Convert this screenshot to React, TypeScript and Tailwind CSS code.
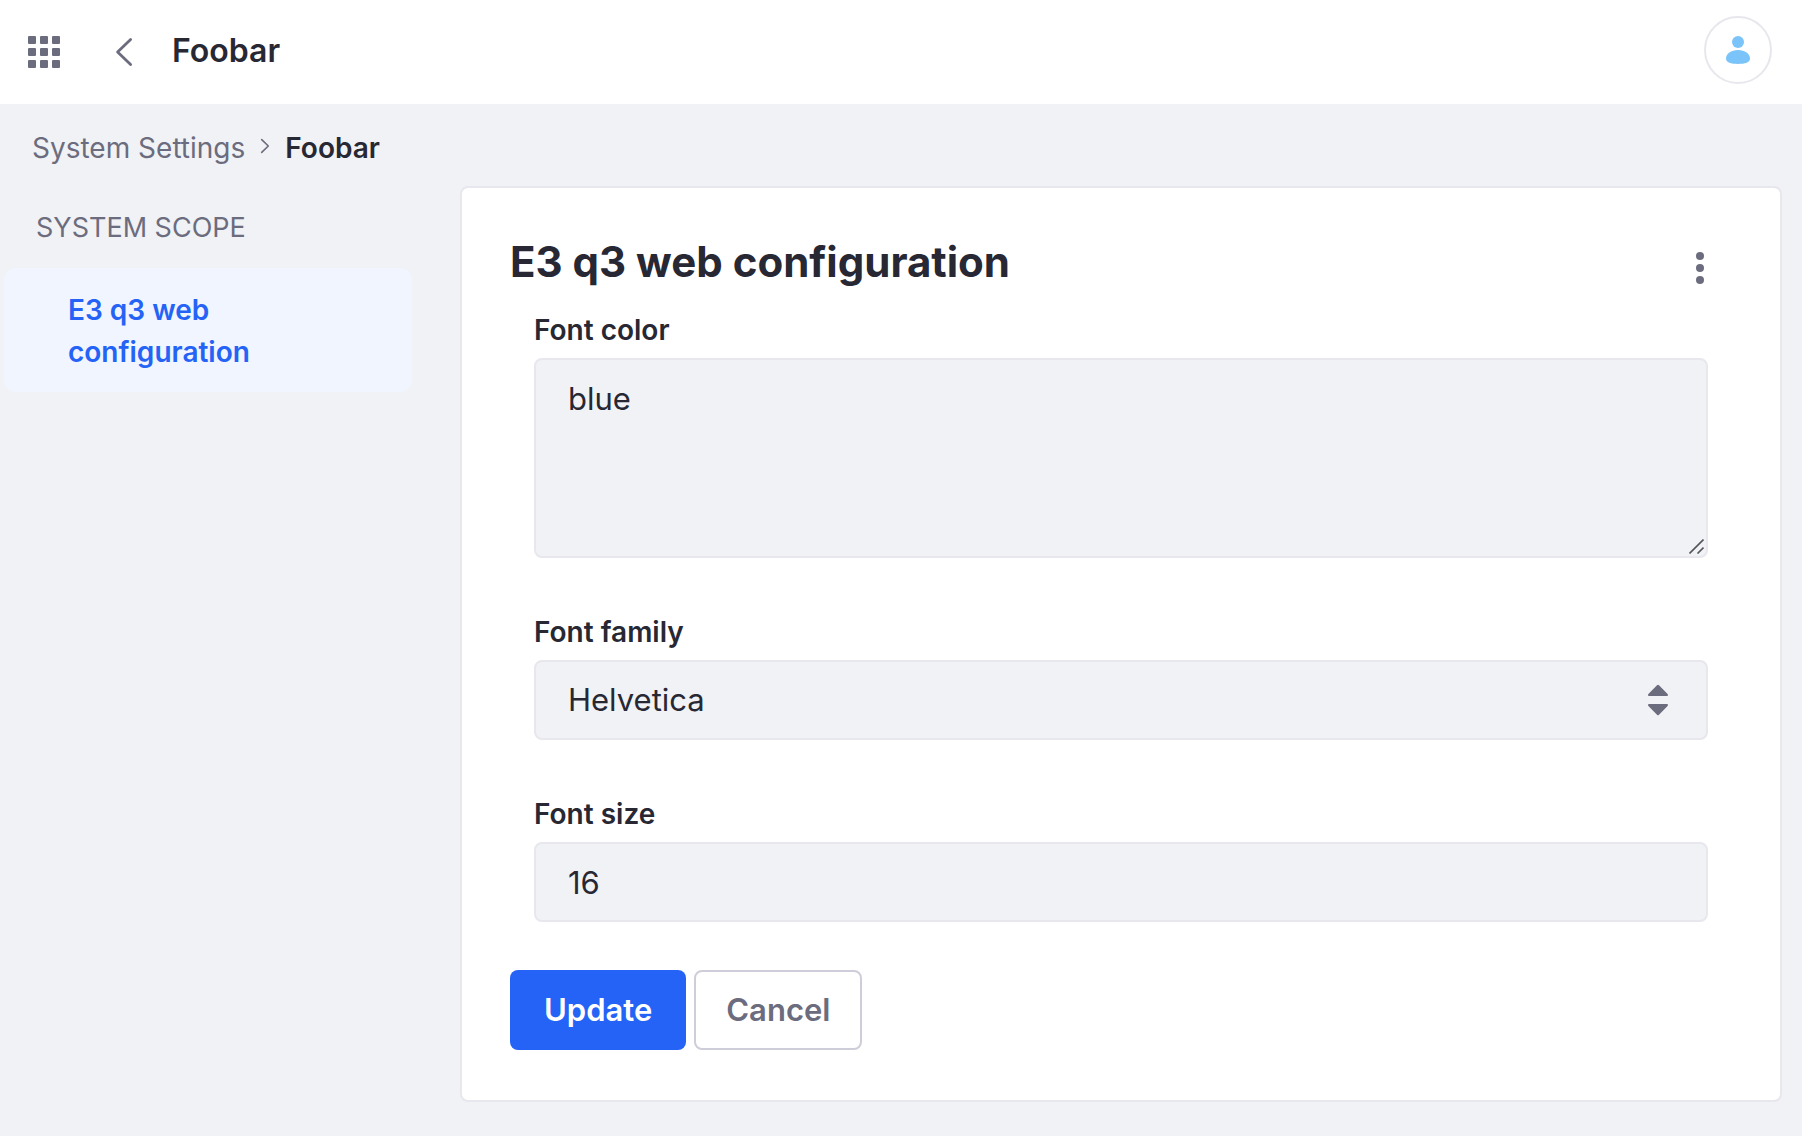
import type { ReactNode } from 'react';

const INPUT =
  'block w-full rounded-lg border-2 border-[#e7e7ed] bg-[#f1f2f5] px-8 text-[31px] leading-[48px] text-[#272833] outline-none focus:border-[#80acff]';

function Field({ id, label, children }: { id: string; label: string; children: ReactNode }) {
  return (
    <div>
      <label htmlFor={id} className="mb-[7px] block text-[28px] leading-[42px] font-semibold">
        {label}
      </label>
      {children}
    </div>
  );
}

function Header() {
  return (
    <header className="flex h-[104px] items-center bg-white pr-[30px] pl-7">
      <button type="button" aria-label="Applications menu" className="text-[#6b6c7e]">
        <svg width="32" height="32" viewBox="0 0 32 32" fill="currentColor">
          {[0, 12, 24].map((y) =>
            [0, 12, 24].map((x) => <rect key={`${x}-${y}`} x={x} y={y} width="8" height="8" rx="1" />),
          )}
        </svg>
      </button>
      <a href="#back" aria-label="Back" className="ml-12 text-[#6b6c7e]">
        <svg width="32" height="32" viewBox="0 0 32 32" fill="none" stroke="currentColor" strokeWidth="2.8" strokeLinecap="round" strokeLinejoin="round">
          <path d="M22.6 3.4 9.6 16l13 12.6" />
        </svg>
      </a>
      <h1 className="mb-0.5 ml-8 text-[32px] leading-[48px] font-semibold">Foobar</h1>
      <button
        type="button"
        aria-label="User profile"
        className="mb-1 ml-auto flex size-[68px] items-center justify-center rounded-full border-2 border-[#e7e7ed] bg-white text-[#7ac4f9]"
      >
        <svg width="24" height="28" viewBox="0 0 24 28" fill="currentColor">
          <circle cx="12" cy="6" r="6" />
          <path d="M12 14c7 0 12 3.8 12 8.600C24 26.800 19 28 12 28S0 26.800 0 22.600C0 17.800 5 14 12 14z" />
        </svg>
      </button>
    </header>
  );
}

export default function App() {
  return (
    <div className="min-h-screen bg-[#f1f2f5] font-['Inter',sans-serif] text-[#272833]">
      <Header />
      <nav aria-label="Breadcrumb" className="px-8 pt-[23px] pb-[17px]">
        <ol className="flex items-center text-[28px] leading-[42px]">
          <li>
            <a href="#system-settings" className="text-[#6b6c7e]">
              System Settings
            </a>
          </li>
          <li aria-hidden="true" className="mx-3.5">
            <svg className="mb-0.5" width="12" height="20" viewBox="0 0 12 20" fill="none" stroke="#6b6c7e" strokeWidth="1.6" strokeLinecap="round" strokeLinejoin="round">
              <path d="M2.700 2.600 9.300 9l-6.600 6.400" />
            </svg>
          </li>
          <li aria-current="page" className="font-semibold">
            Foobar
          </li>
        </ol>
      </nav>
      <div className="flex items-start pr-5">
        <aside className="w-[460px] shrink-0 pt-[21px] pr-12 pl-1">
          <h2 className="mb-[19px] px-8 text-[27px] leading-[42px] text-[#6b6c7e]">SYSTEM SCOPE</h2>
          <a
            href="#e3-q3-web-configuration"
            className="block rounded-xl bg-[#f0f5ff] pt-[21px] pr-32 pb-[19px] pl-16 text-[28px] leading-[42px] font-semibold text-[#2563f6]"
          >
            E3 q3 web configuration
          </a>
        </aside>
        <main className="min-w-0 grow rounded-lg border-2 border-[#e7e7ed] bg-white px-12 pt-12 pb-[50px]">
          <form onSubmit={(e) => e.preventDefault()}>
            <div className="mb-[21px] flex items-center justify-between pr-7">
              <h2 className="text-[42px] leading-[52px] font-bold">E3 q3 web configuration</h2>
              <button type="button" aria-label="Options" className="mt-3 text-[#6b6c7e]">
                <svg width="8" height="32" viewBox="0 0 8 32" fill="currentColor">
                  <circle cx="4" cy="4" r="4" />
                  <circle cx="4" cy="16" r="4" />
                  <circle cx="4" cy="28" r="4" />
                </svg>
              </button>
            </div>
            <div className="flex flex-col gap-[53px] px-6">
              <Field id="font-color" label="Font color">
                <div className="relative">
                  <textarea id="font-color" defaultValue="blue" className={`${INPUT} h-[200px] resize-none py-[15px]`} />
                  <svg className="pointer-events-none absolute right-1 bottom-1" width="15" height="15" viewBox="0 0 15 15" fill="none" stroke="#55565c" strokeWidth="1.6">
                    <path d="M.5 14.500 14.500.5M8.500 14.500l6-6" />
                  </svg>
                </div>
              </Field>
              <Field id="font-family" label="Font family">
                <div className="relative">
                  <select id="font-family" defaultValue="Helvetica" className={`${INPUT} h-20 appearance-none`}>
                    <option>Helvetica</option>
                    <option>Arial</option>
                    <option>Times</option>
                  </select>
                  <svg className="pointer-events-none absolute top-6 right-10" width="20" height="32" viewBox="0 0 20 32" fill="#6b6c7e">
                    <path d="M9 1.200a1.400 1.400 0 0 1 2 0l8.600 8.900c.7.800.3 1.900-.8 1.900H1.200C.1 12-.3 10.900.4 10.100zM9 30.800a1.400 1.400 0 0 0 2 0l8.600-8.900c.7-.8.300-1.900-.8-1.900H1.200C.1 20-.3 21.100.4 21.900z" />
                  </svg>
                </div>
              </Field>
              <Field id="font-size" label="Font size">
                <input id="font-size" type="text" defaultValue="16" className={`${INPUT} h-20`} />
              </Field>
            </div>
            <div className="mt-12 flex gap-2">
              <button type="submit" className="h-20 rounded-lg bg-[#2563f6] px-[34px] text-[31px] leading-[48px] font-semibold text-white">
                Update
              </button>
              <button
                type="button"
                className="h-20 rounded-lg border-2 border-[#cdced9] bg-white px-[30px] text-[31px] leading-[48px] font-semibold text-[#6b6c7e]"
              >
                Cancel
              </button>
            </div>
          </form>
        </main>
      </div>
    </div>
  );
}
